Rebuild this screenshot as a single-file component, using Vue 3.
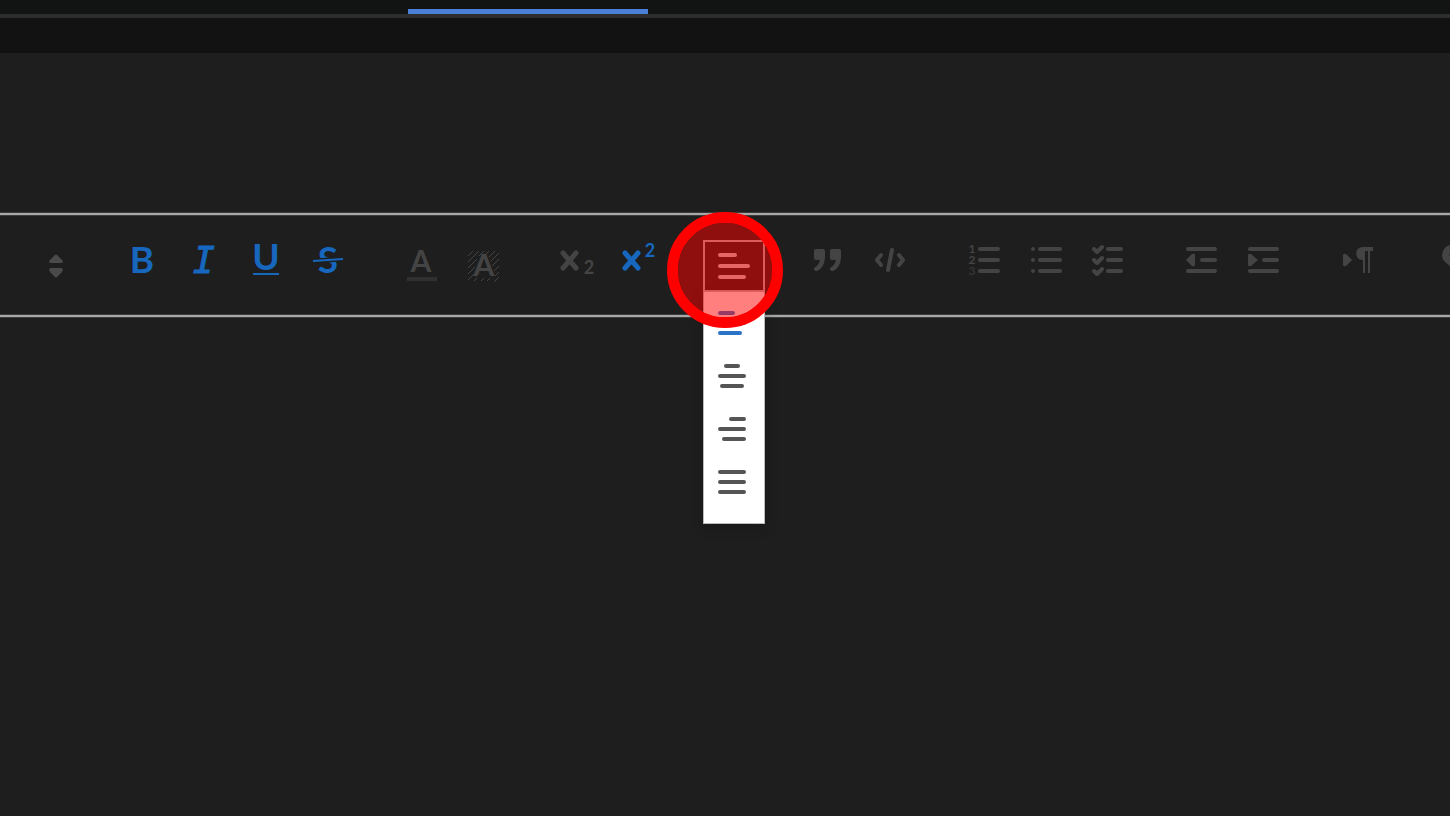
<template>
  <div class="page">
    <nav class="tabs" aria-label="Sections">
      <a class="tab active" href="#" aria-label="Current section"></a>
    </nav>
    <div class="subheader"></div>

    <main class="editor">
      <div class="toolbar" role="toolbar" aria-label="Formatting">
        <label class="picker">
          <select v-model="size" aria-label="Text size">
            <option value=""></option>
          </select>
          <svg class="picker-icon" viewBox="0 0 16 24" aria-hidden="true">
            <path d="M7 1 Q8 0 9 1 L14 6 Q16 9 13 9 H3 Q0 9 2 6 Z" />
            <path d="M7 23 Q8 24 9 23 L14 18 Q16 14 13 14 H3 Q0 14 2 18 Z" />
          </svg>
        </label>

        <div v-for="group in groups" :key="group.name" class="group">
          <div v-for="tool in group.tools" :key="tool.id" class="tool">
            <button
              type="button"
              class="tool-button"
              :class="{ on: active.includes(tool.id), expanded: tool.id === 'align' && menuOpen }"
              :aria-label="tool.label"
              @click="useTool(tool.id)"
            >
              <svg class="icon" viewBox="0 0 62 52" aria-hidden="true">
                <text v-if="tool.id === 'bold'" class="letter" x="31" y="33">B</text>
                <text v-else-if="tool.id === 'italic'" class="letter italic" x="31" y="33">I</text>
                <g v-else-if="tool.id === 'underline'">
                  <text class="letter" x="31" y="30">U</text>
                  <path class="thin" d="M18 34 H44" />
                </g>
                <g v-else-if="tool.id === 'strike'">
                  <text class="letter" x="31" y="33">S</text>
                  <path class="gap" d="M20 21 L42 19" />
                  <path class="thin" d="M16 21 L46 19" />
                </g>
                <g v-else-if="tool.id === 'color'">
                  <text class="letter small" x="30" y="32">A</text>
                  <path class="faint" d="M16 39 H46" />
                </g>
                <g v-else-if="tool.id === 'background'">
                  <path class="hatch" d="M15 16 L20 11 M15 22 L26 11 M15 28 L24 19 M15 34 L22 27 M15 40 L21 34 M26 16 L31 11 M21 41 L24 38 M28 41 L31 38 M34 41 L37 38 M33 14 L36 11 M36 17 L42 11 M38 21 L46 13 M39 26 L46 19 M41 31 L46 26 M42 36 L46 32 M41 42 L46 37" />
                  <text class="letter small" x="31" y="36">A</text>
                </g>
                <g v-else-if="tool.id === 'sub'">
                  <path class="cross" d="M16 13 L29 28 M29 13 L16 28" />
                  <text class="index" x="42" y="34">2</text>
                </g>
                <g v-else-if="tool.id === 'super'">
                  <path class="cross" d="M16 13 L29 28 M29 13 L16 28" />
                  <text class="index" x="41" y="17">2</text>
                </g>
                <path v-else-if="tool.id === 'align'" class="bars" d="M17 15 H32 M17 26 H45 M17 37 H41" />
                <path v-else-if="tool.id === 'quote'" class="solid" d="M17 11 Q17 9 19 9 H26 Q28 9 28 11 V18 Q27 28 20 31 Q17 31 17 29 V28 Q22 25 23 20 H19 Q17 20 17 18 Z M33 11 Q33 9 35 9 H42 Q44 9 44 11 V18 Q43 28 36 31 Q33 31 33 29 V28 Q38 25 39 20 H35 Q33 20 33 18 Z" />
                <path v-else-if="tool.id === 'code'" class="code" d="M22 15 L18 20 L22 25 M33 10 L29 30 M40 15 L44 20 L40 25" />
                <g v-else-if="tool.id === 'ordered'">
                  <text class="number" x="19" y="13">1</text>
                  <text class="number" x="19" y="24">2</text>
                  <text class="number dim" x="19" y="35">3</text>
                  <path class="bars" d="M27 9 H45 M27 20 H45 M27 31 H45" />
                </g>
                <path v-else-if="tool.id === 'bullet'" class="bars" d="M18 9 H18 M18 20 H18 M18 31 H18 M25 9 H45 M25 20 H45 M25 31 H45" />
                <g v-else-if="tool.id === 'check'">
                  <path class="check" d="M17 9 L20 12 L25 7 M17 20 L20 23 L25 18 M17 31 L20 34 L25 29" />
                  <path class="bars" d="M31 9 H44 M31 20 H44 M31 31 H44" />
                </g>
                <g v-else-if="tool.id === 'outdent'">
                  <path class="bars" d="M17 9 H44 M31 20 H44 M17 31 H44" />
                  <path class="solid" d="M15 20 L21 14 Q24 13 24 15 V25 Q24 27 21 26 Z" />
                </g>
                <g v-else-if="tool.id === 'indent'">
                  <path class="bars" d="M17 9 H44 M31 20 H44 M17 31 H44" />
                  <path class="solid" d="M15 15 Q15 13 18 14 L25 20 L18 26 Q15 27 15 25 Z" />
                </g>
                <g v-else-if="tool.id === 'direction'">
                  <path class="solid" d="M16 15 Q16 13 19 14 L25 20 L19 26 Q16 27 16 25 Z" />
                  <path class="solid" d="M36 7 H46 V11 H43 V33 H41 V11 H38 V33 H36 V20 C27 20 27 7 36 7 Z" />
                </g>
                <path v-else-if="tool.id === 'link'" class="link" d="M32 27 Q29 23 26 21 A8 8 0 0 1 32 7 Q36 8 38 11 M33 18 A4 4 0 1 0 28 18" />
              </svg>
            </button>

            <template v-if="tool.id === 'align'">
              <div v-if="menuOpen" class="menu" role="menu">
                <button
                  v-for="option in alignments"
                  :key="option.id"
                  type="button"
                  role="menuitemradio"
                  class="menu-item"
                  :class="{ selected: option.id === alignment }"
                  :aria-checked="option.id === alignment"
                  :aria-label="option.label"
                  @click="alignment = option.id"
                >
                  <svg class="menu-icon" viewBox="0 0 28 24" aria-hidden="true">
                    <path :d="option.path" />
                  </svg>
                </button>
              </div>
              <span class="marker"></span>
            </template>
          </div>
        </div>
      </div>
      <div class="content"></div>
    </main>
  </div>
</template>

<script setup>
import { ref } from 'vue';

const size = ref('');
const menuOpen = ref(true);
const alignment = ref('left');
const active = ref(['bold', 'italic', 'underline', 'strike', 'super']);

const groups = [
  {
    name: 'style',
    tools: [
      { id: 'bold', label: 'Bold' },
      { id: 'italic', label: 'Italic' },
      { id: 'underline', label: 'Underline' },
      { id: 'strike', label: 'Strikethrough' }
    ]
  },
  {
    name: 'color',
    tools: [
      { id: 'color', label: 'Text color' },
      { id: 'background', label: 'Background color' }
    ]
  },
  {
    name: 'script',
    tools: [
      { id: 'sub', label: 'Subscript' },
      { id: 'super', label: 'Superscript' }
    ]
  },
  { name: 'align', tools: [{ id: 'align', label: 'Align' }] },
  {
    name: 'block',
    tools: [
      { id: 'quote', label: 'Quote' },
      { id: 'code', label: 'Code' }
    ]
  },
  {
    name: 'list',
    tools: [
      { id: 'ordered', label: 'Numbered list' },
      { id: 'bullet', label: 'Bulleted list' },
      { id: 'check', label: 'Checklist' }
    ]
  },
  {
    name: 'indent',
    tools: [
      { id: 'outdent', label: 'Decrease indent' },
      { id: 'indent', label: 'Increase indent' }
    ]
  },
  { name: 'direction', tools: [{ id: 'direction', label: 'Text direction' }] },
  { name: 'link', tools: [{ id: 'link', label: 'Link' }] }
];

const alignments = [
  { id: 'left', label: 'Left', path: 'M2 2 H15 M2 12 H26 M2 22 H22' },
  { id: 'center', label: 'Center', path: 'M8 2 H20 M2 12 H26 M4 22 H24' },
  { id: 'right', label: 'Right', path: 'M13 2 H26 M2 12 H26 M6 22 H26' },
  { id: 'justify', label: 'Justify', path: 'M2 2 H26 M2 12 H26 M2 22 H26' }
];

// Toggle a format, or open the menu for the align button
const useTool = (id) => {
  if (id === 'align') {
    menuOpen.value = !menuOpen.value;
    return;
  }
  if (active.value.includes(id)) {
    active.value = active.value.filter((item) => item !== id);
  } else {
    active.value.push(id);
  }
};
</script>

<style>
body {
  background: #1e1e1e;
}
</style>

<style scoped>
.page {
  display: flex;
  flex-direction: column;
  min-height: 100vh;
  overflow: hidden;
  background: #1e1e1e;
  font-family: Lato, "Liberation Sans", sans-serif;
}

.tabs {
  display: flex;
  height: 14px;
  padding-left: 408px;
  background: #121313;
  border-bottom: 4px solid #2d2d2d;
}

.tab {
  width: 240px;
}

.tab.active {
  border-bottom: 5px solid #4a80d6;
}

.subheader {
  height: 35px;
  background: #121212;
}

.editor {
  display: flex;
  flex: 1;
  flex-direction: column;
  padding-top: 160px;
}

.toolbar {
  display: flex;
  gap: 32px;
  padding: 25px 0 23px;
  border-top: 2px solid #a8a8a8;
  border-bottom: 2px solid #a8a8a8;
  box-shadow: 0 0 0 1px #3c3c3c, inset 0 1px 0 #3c3c3c, inset 0 -1px 0 #3c3c3c;
}

.content {
  flex: 1;
}

.picker {
  position: relative;
  display: flex;
  flex: none;
  align-items: center;
  justify-content: flex-end;
  width: 79px;
  height: 52px;
  box-sizing: border-box;
  padding-right: 15px;
}

.picker select {
  position: absolute;
  inset: 0;
  border: 0;
  background: transparent;
  appearance: none;
}

.picker-icon {
  width: 16px;
  height: 24px;
  fill: #4a4a4a;
}

.group {
  display: flex;
  flex: none;
}

.tool {
  position: relative;
}

.tool-button {
  display: block;
  width: 62px;
  height: 52px;
  padding: 0;
  border: 0;
  background: transparent;
  color: #444;
  font-family: inherit;
  cursor: pointer;
}

.tool-button.on {
  color: #1667bd;
}

.tool-button.expanded {
  color: #ccc;
  outline: 2px solid #b8b8b8;
  outline-offset: -2px;
}

.icon {
  display: block;
  width: 62px;
  height: 52px;
  overflow: visible;
  fill: none;
  stroke: currentColor;
}

.icon text {
  fill: currentColor;
  stroke: none;
  text-anchor: middle;
}

.letter {
  font-size: 37px;
  font-weight: 700;
}

.italic {
  font-family: "DejaVu Sans Mono", monospace;
  font-style: italic;
  font-weight: 400;
}

.icon .italic {
  stroke: currentColor;
}

.small {
  font-size: 30px;
}

.index {
  font-size: 18px;
  font-weight: 700;
}

.number {
  font-size: 12px;
  font-weight: 700;
}

.dim {
  opacity: 0.6;
}

.thin {
  stroke-width: 2;
}

.gap {
  stroke: #1e1e1e;
  stroke-width: 5;
}

.faint {
  stroke: #303030;
  stroke-width: 4;
}

.hatch {
  stroke-width: 1;
}

.cross {
  stroke-width: 5;
  stroke-linecap: round;
}

.bars {
  stroke-width: 4;
  stroke-linecap: round;
}

.solid {
  fill: currentColor;
  stroke: none;
}

.code,
.check,
.link {
  stroke-width: 4;
  stroke-linecap: round;
  stroke-linejoin: round;
}

.menu {
  position: absolute;
  top: 51px;
  left: 0;
  z-index: 1;
  display: flex;
  flex-direction: column;
  width: 62px;
  box-sizing: border-box;
  padding: 4px 0 15px;
  border: 1px solid #bbb;
  background: #fff;
  box-shadow: 0 4px 12px rgba(0, 0, 0, 0.2);
}

.menu-item {
  display: flex;
  align-items: center;
  height: 53px;
  padding: 0 0 0 14px;
  border: 0;
  background: transparent;
  color: #555;
  cursor: pointer;
}

.menu-item.selected {
  color: #2a74c8;
}

.menu-icon {
  width: 28px;
  height: 24px;
  fill: none;
  stroke: currentColor;
  stroke-width: 4;
  stroke-linecap: round;
}

/* Ring that highlights the align control */
.marker {
  position: absolute;
  top: -28px;
  left: -36px;
  z-index: 2;
  width: 116px;
  height: 116px;
  box-sizing: border-box;
  border: 11px solid #f00;
  border-radius: 50%;
  background: rgba(255, 0, 0, 0.5);
  background-clip: padding-box;
  pointer-events: none;
}
</style>
